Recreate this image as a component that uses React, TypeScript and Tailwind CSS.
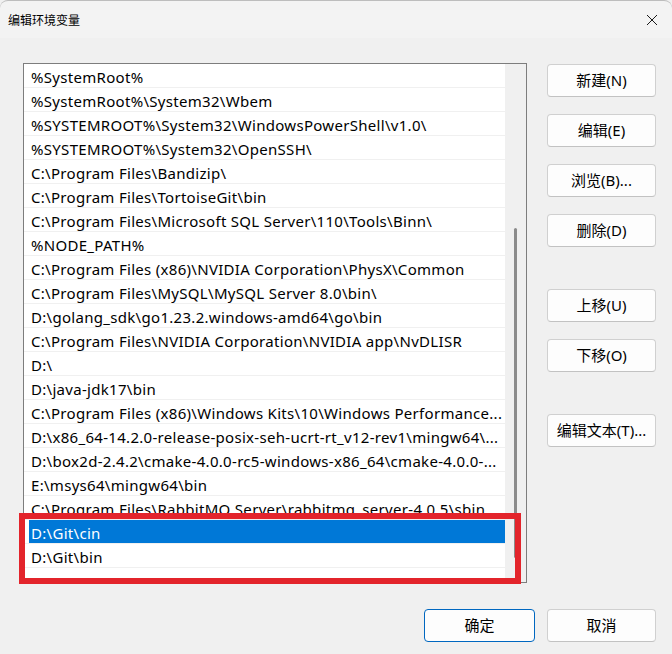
import React from "react";

const rows: string[] = [
  "%SystemRoot%",
  "%SystemRoot%\\System32\\Wbem",
  "%SYSTEMROOT%\\System32\\WindowsPowerShell\\v1.0\\",
  "%SYSTEMROOT%\\System32\\OpenSSH\\",
  "C:\\Program Files\\Bandizip\\",
  "C:\\Program Files\\TortoiseGit\\bin",
  "C:\\Program Files\\Microsoft SQL Server\\110\\Tools\\Binn\\",
  "%NODE_PATH%",
  "C:\\Program Files (x86)\\NVIDIA Corporation\\PhysX\\Common",
  "C:\\Program Files\\MySQL\\MySQL Server 8.0\\bin\\",
  "D:\\golang_sdk\\go1.23.2.windows-amd64\\go\\bin",
  "C:\\Program Files\\NVIDIA Corporation\\NVIDIA app\\NvDLISR",
  "D:\\",
  "D:\\java-jdk17\\bin",
  "C:\\Program Files (x86)\\Windows Kits\\10\\Windows Performance...",
  "D:\\x86_64-14.2.0-release-posix-seh-ucrt-rt_v12-rev1\\mingw64\\...",
  "D:\\box2d-2.4.2\\cmake-4.0.0-rc5-windows-x86_64\\cmake-4.0.0-...",
  "E:\\msys64\\mingw64\\bin",
  "C:\\Program Files\\RabbitMQ Server\\rabbitmq_server-4.0.5\\sbin",
  "D:\\Git\\cin",
  "D:\\Git\\bin",
  "",
];

const font = { fontFamily: '"Noto Sans", "Noto Sans CJK SC", sans-serif' };

function Btn({ label, className = "" }: { label: string; className?: string }) {
  return (
    <div
      className={`w-[109px] h-[33px] flex items-center justify-center rounded-[4px] border border-[#d0d0d0] border-b-[#c2c2c2] bg-[#fdfdfd] text-[15px] text-black ${className}`}
    >
      {label}
    </div>
  );
}

export default function App() {
  return (
    <div
      className="relative w-[672px] h-[654px] bg-[#f0f0f0] overflow-hidden"
      style={font}
    >
      {/* title bar */}
      <div className="h-[38px] flex items-center justify-between bg-[#f3f3f3] border-t border-[#bdbdbd] rounded-t-[8px]">
        <span className="pl-[8px] text-[12px] text-black leading-[16px] pt-[2px]">编辑环境变量</span>
        <svg width="12" height="12" viewBox="0 0 12 12" className="mr-[14px]">
          <path d="M1 1 L11 11 M11 1 L1 11" stroke="#1a1a1a" strokeWidth="1" fill="none" />
        </svg>
      </div>

      <div className="flex">
        {/* list box */}
        <div className="ml-[23px] mt-[25px] w-[504px] h-[520px] border border-[#7d7d7d] flex bg-white">
          <div className="w-[481px] h-full overflow-hidden bg-white">
            {rows.map((r, i) => {
              const selected = i === 19;
              return (
                <div
                  key={i}
                  className="h-[24px] border-b border-[#f0f0f0] flex items-center relative overflow-hidden"
                >
                  {selected && (
                    <div className="absolute left-[5px] right-0 top-0 bottom-0 bg-[#0078d7]" />
                  )}
                  <span
                    className={`relative pl-[7px] pt-[2px] text-[15px] tracking-[0.3px] whitespace-nowrap leading-[20px] ${
                      selected ? "text-white" : "text-black"
                    }`}
                  >
                    {r}
                  </span>
                </div>
              );
            })}
          </div>
          <div className="flex-1 bg-[#f0f0f0] flex justify-center">
            <div className="mt-[164px] w-[3px] h-[330px] rounded-full bg-[#8b8b8b]" />
          </div>
        </div>

        {/* right buttons */}
        <div className="ml-[20px] mt-[26px] flex flex-col">
          <Btn label="新建(N)" />
          <Btn label="编辑(E)" className="mt-[17px]" />
          <Btn label="浏览(B)..." className="mt-[17px]" />
          <Btn label="删除(D)" className="mt-[17px]" />
          <Btn label="上移(U)" className="mt-[42px]" />
          <Btn label="下移(O)" className="mt-[17px]" />
          <Btn label="编辑文本(T)..." className="mt-[42px]" />
        </div>
      </div>

      {/* bottom buttons */}
      <div className="flex justify-end gap-[12px] pr-[16px] mt-[26px]">
        <div className="w-[111px] h-[33px] flex items-center justify-center rounded-[4px] border border-[#0067c0] bg-[#fdfdfd] text-[15px] text-black">
          确定
        </div>
        <Btn label="取消" />
      </div>

      {/* red annotation box */}
      <div className="absolute left-[19px] top-[513px] w-[502px] h-[71px] border-[6px] border-[#e3242b]" />
    </div>
  );
}
